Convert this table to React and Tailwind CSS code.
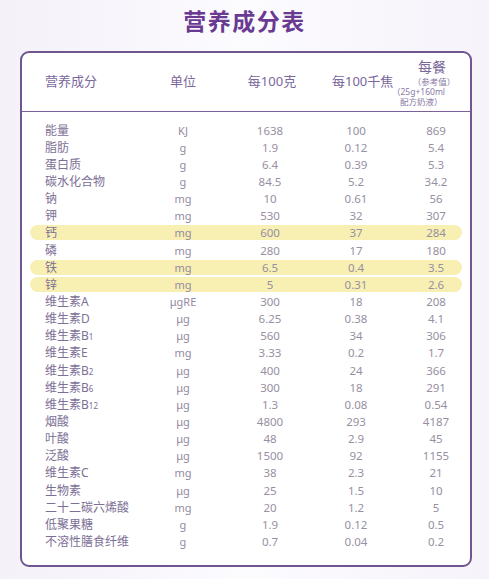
import React from 'react';

const rows = [
  { name: '能量', unit: 'KJ', a: '1638', b: '100', c: '869' },
  { name: '脂肪', unit: 'g', a: '1.9', b: '0.12', c: '5.4' },
  { name: '蛋白质', unit: 'g', a: '6.4', b: '0.39', c: '5.3' },
  { name: '碳水化合物', unit: 'g', a: '84.5', b: '5.2', c: '34.2' },
  { name: '钠', unit: 'mg', a: '10', b: '0.61', c: '56' },
  { name: '钾', unit: 'mg', a: '530', b: '32', c: '307' },
  { name: '钙', unit: 'mg', a: '600', b: '37', c: '284', hl: true },
  { name: '磷', unit: 'mg', a: '280', b: '17', c: '180' },
  { name: '铁', unit: 'mg', a: '6.5', b: '0.4', c: '3.5', hl: true },
  { name: '锌', unit: 'mg', a: '5', b: '0.31', c: '2.6', hl: true },
  { name: '维生素A', unit: 'μgRE', a: '300', b: '18', c: '208' },
  { name: '维生素D', unit: 'μg', a: '6.25', b: '0.38', c: '4.1' },
  { name: '维生素B', sub: '1', unit: 'μg', a: '560', b: '34', c: '306' },
  { name: '维生素E', unit: 'mg', a: '3.33', b: '0.2', c: '1.7' },
  { name: '维生素B', sub: '2', unit: 'μg', a: '400', b: '24', c: '366' },
  { name: '维生素B', sub: '6', unit: 'μg', a: '300', b: '18', c: '291' },
  { name: '维生素B', sub: '12', unit: 'μg', a: '1.3', b: '0.08', c: '0.54' },
  { name: '烟酸', unit: 'μg', a: '4800', b: '293', c: '4187' },
  { name: '叶酸', unit: 'μg', a: '48', b: '2.9', c: '45' },
  { name: '泛酸', unit: 'μg', a: '1500', b: '92', c: '1155' },
  { name: '维生素C', unit: 'mg', a: '38', b: '2.3', c: '21' },
  { name: '生物素', unit: 'μg', a: '25', b: '1.5', c: '10' },
  { name: '二十二碳六烯酸', unit: 'mg', a: '20', b: '1.2', c: '5' },
  { name: '低聚果糖', unit: 'g', a: '1.9', b: '0.12', c: '0.5' },
  { name: '不溶性膳食纤维', unit: 'g', a: '0.7', b: '0.04', c: '0.2' },
];

const grid = 'grid grid-cols-[120px_66px_108px_64px_1fr] items-center';

export default function App() {
  return (
    <div
      className="w-[489px] h-[579px] bg-gradient-to-r from-[#f4f1f9] via-[#fcfbfe] to-[#f6f3fa] overflow-hidden"
      style={{ fontFamily: '"Noto Sans", "Noto Sans CJK SC", sans-serif' }}
    >
      {/* Title */}
      <h1 className="pt-[7px] h-[51px] text-center text-[23px] leading-[28px] font-semibold text-[#6a3a93] tracking-[1.5px]">
        营养成分表
      </h1>

      {/* Card */}
      <div className="ml-[20px] w-[452px] h-[516px] bg-white border-2 border-[#70568f] rounded-[9px]">
        {/* Header */}
        <div className="h-[59px] border-b-[1.5px] border-[#7a5f9a] px-2 flex items-center">
          <div className={`${grid} w-full text-[13px] text-[#7a679c]`}>
            <div className="pl-[15px]">营养成分</div>
            <div className="text-center">单位</div>
            <div className="text-center pl-[4px]">每100克</div>
            <div className="text-center pl-[8px] whitespace-nowrap">每100千焦</div>
            <div className="pl-[14px] pt-[3px]">
              <div className="text-center text-[14px] leading-[14px]">每餐</div>
              <div className="text-[8.5px] leading-[10px] text-[#8a7aa6] mt-[3px]">
                <div className="text-center pl-[4px]">（参考值）</div>
                <div className="whitespace-nowrap -ml-[10px]">（25g+160ml</div>
                <div className="-ml-[2px]">配方奶液）</div>
              </div>
            </div>
          </div>
        </div>

        {/* Rows */}
        <div className="pt-[9.5px]">
          {rows.map((r) => (
            <div key={r.name + (r.sub || '')} className="h-[17.15px] flex items-center">
              <div
                className={`${grid} w-full mx-2 h-[15px] rounded-full ${
                  r.hl ? 'bg-[#f8efb2]' : ''
                }`}
              >
                <div className="pl-[15px] text-[12px] leading-[15px] text-[#7d7096] whitespace-nowrap">
                  {r.name}
                  {r.sub && <sub className="text-[8px] bottom-0">{r.sub}</sub>}
                </div>
                <div className="text-center text-[11px] leading-[15px] text-[#948aa1]">{r.unit}</div>
                <div className="text-center text-[11.5px] leading-[15px] text-[#978fa2]">{r.a}</div>
                <div className="text-center text-[11.5px] leading-[15px] text-[#978fa2]">{r.b}</div>
                <div className="text-center pl-[22px] text-[11.5px] leading-[15px] text-[#978fa2]">{r.c}</div>
              </div>
            </div>
          ))}
        </div>
      </div>
    </div>
  );
}
